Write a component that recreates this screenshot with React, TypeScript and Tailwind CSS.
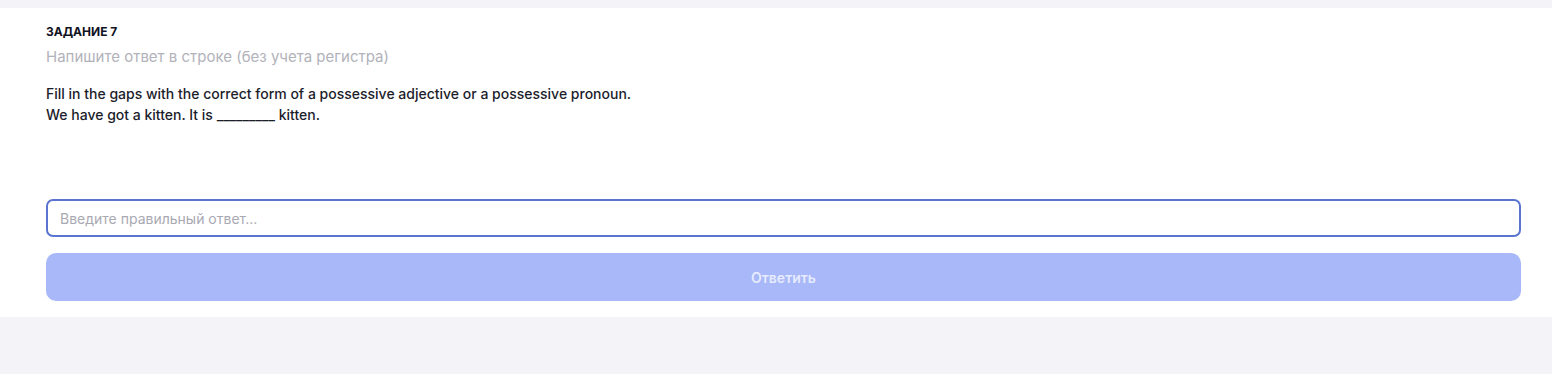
export default function App() {
  return (
    <div className="min-h-[374px] bg-[#f3f3f8] pt-2 font-['Inter',sans-serif]">
      <section className="bg-white pl-[46px] pr-[31px] pt-4 pb-4">
        <h3 className="text-[12px] font-bold leading-4 text-[#111322]">ЗАДАНИЕ 7</h3>
        <p className="mt-[7px] text-[15px] leading-5 text-[#b2b2ba]">Напишите ответ в строке (без учета регистра)</p>
        <div className="mt-4 text-[14px] font-medium leading-[21px] text-[#1c1d2b]">
          <p>Fill in the gaps with the correct form of a possessive adjective or a possessive pronoun.</p>
          <p>We have got a kitten. It is _________ kitten.</p>
        </div>
        <input
          className="mt-[74px] block h-[38px] w-full rounded-[7px] border-2 border-[#5b74cf] px-3 text-[14px] text-[#1c1d2b] outline-none placeholder:text-[#a9a9b2]"
          placeholder="Введите правильный ответ..."
        />
        <button className="mt-4 h-12 w-full rounded-[10px] bg-[#a8b8f8] text-[14px] font-semibold text-[#e6ebff]">
          Ответить
        </button>
      </section>
    </div>
  );
}
